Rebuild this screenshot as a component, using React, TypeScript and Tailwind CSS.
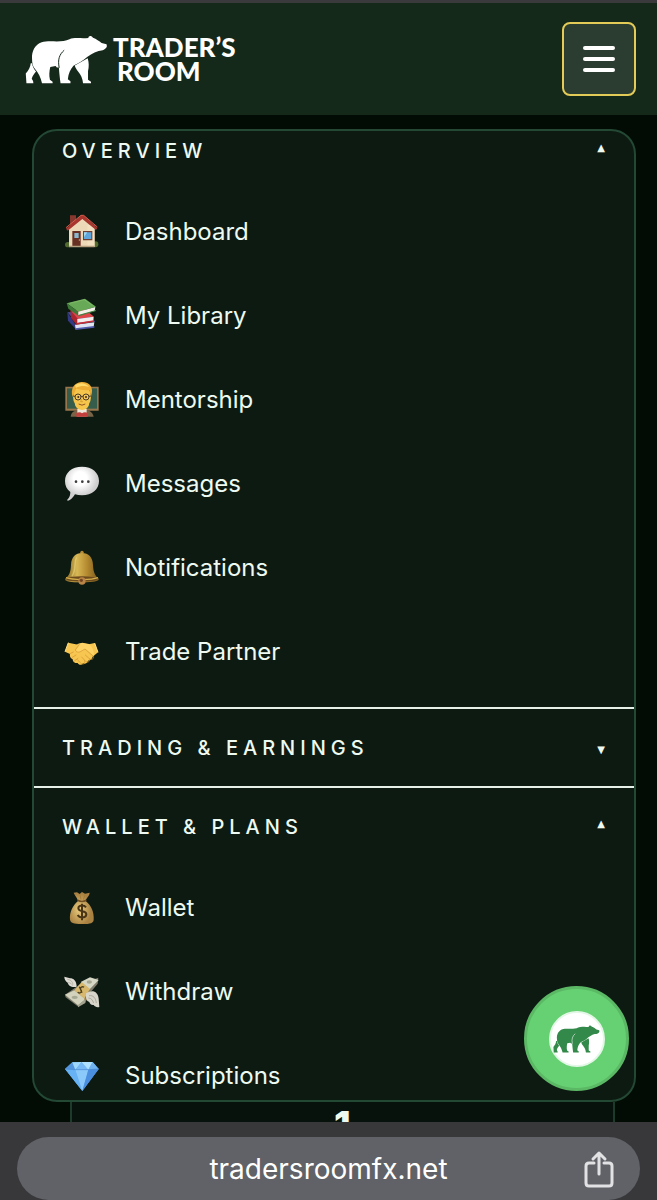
import React from 'react';

interface BearProps {
  className: string;
  cut: string;
}

const Bear: React.FC<BearProps> = ({ className, cut }) => (
  <svg viewBox="76 99 250 148" className={className} fill="currentColor" aria-hidden="true">
    <path d="M93 184 L97 184 C98 194 103 202 109 209 C103 216 98 222 96 231 L100 238 L101 245 L80 245 L78 215 C86 206 92 196 93 184Z" />
    <path d="M226 191 L265 169 C269 182 269 195 266 208 L266 234 L275 240 L275 245 L251 245 C250 231 244 218 236 209 C231 203 228 198 226 191Z" />
    <path d="M97 172 C95 148 106 128 126 121 C148 114 188 124 210 112 C226 105 246 111 267 108 C267 101 276 99 281 107 C291 111 300 117 307 123 L322 127 L323 133 C320 143 310 146 298 147 C281 152 268 161 254 173 C242 182 230 187 222 192 C213 202 207 214 205 233 L213 239 L213 245 L183 245 C181 229 179 214 178 197 L172 197 L168 193 L152 196 C149 209 148 222 151 234 L159 240 L159 245 L127 245 C123 226 116 214 106 202 C99 193 97 184 97 172Z" />
    <path d="M194 145 C179 158 174 174 179 198" fill="none" stroke={cut} strokeWidth="3" />
  </svg>
);

const House = () => (
  <>
    <ellipse cx="12" cy="95" rx="9" ry="8" fill="#526b2e" />
    <ellipse cx="95" cy="94" rx="8" ry="9" fill="#526b2e" />
    <path d="M18 7h18v25l-18 13z" fill="#87382e" />
    <path d="M15 46 54 14l38 31v57H15z" fill="#ecd9b7" />
    <path d="M70 35h22v67H70z" fill="#f7e7ca" opacity=".5" />
    <path d="M6 47 51 7h8l41 38-4 6-41-33-44 35z" fill="#a7372f" />
    <path d="M6 44 51 7h8l41 35" fill="none" stroke="#d65c4b" strokeWidth="3" />
    <path d="M25 54h25v48H25z" fill="#673023" />
    <path d="M31 60h13v15H31z" fill="#89b8cf" />
    <circle cx="46" cy="81" r="2" fill="#dfbe72" />
    <path d="M57 54h28v28H57z" fill="#704034" />
    <path d="M60 58h22v20H60z" fill="#5fa6dd" />
    <path d="M60 58h10L60 73z" fill="#a0d4ef" />
    <path d="M15 98h77v5H15z" fill="#b5a17f" />
  </>
);

const Books = () => (
  <>
    <path d="m10 46 32 35 52-7-29-30z" fill="#4250a0" />
    <path d="m10 46 2 25 25 27-2-15z" fill="#333a83" />
    <path d="m33 83 58-7-2 13-54 7z" fill="#dfe5f3" />
    <path d="m34 94 57-7v5l-57 7z" fill="#515bad" />
    <path d="m19 40 21 26 50-7-28-23z" fill="#de4649" />
    <path d="m19 40 2 23 17 21 3-19z" fill="#ad252e" />
    <path d="m40 66 49-7-1 12-48 7z" fill="#f4efed" />
    <path d="m38 78 52-8v4l-53 9z" fill="#cc3037" />
    <path d="m8 19 55-14 33 24-53 15z" fill="#67a957" />
    <path d="m8 19 5 16 30 21V44z" fill="#3e7938" />
    <path d="m43 44 51-14-2 12-49 13z" fill="#f1f1e8" />
    <path d="m43 54 53-15v3L44 58z" fill="#438341" />
    <path d="m17 19 44-11 24 17" fill="none" stroke="#89c26f" strokeWidth="2" />
  </>
);

const Teacher = () => (
  <>
    <path d="M4 17h100v72H4z" fill="#9a764d" />
    <path d="M9 22h90v61H9z" fill="#365d4c" />
    <path d="M20 107c2-17 15-21 34-21s32 5 35 21z" fill="#786346" />
    <path d="M40 84h28v22H40z" fill="#eee8dc" />
    <path d="M37 96c7-3 13-3 17 1 5-4 11-4 18-1v11H37z" fill="#c33f3d" />
    <ellipse cx="54" cy="47" rx="27" ry="36" fill="#f6c64c" />
    <ellipse cx="54" cy="69" rx="21" ry="18" fill="#f6c64c" />
    <path d="M26 48C18 23 31 5 52 3c25-1 39 16 29 43l-5-19C60 29 43 26 35 22c0 10-5 14-9 26z" fill="#eead35" />
    <path d="M33 13c11-9 32-9 42 5-13-5-26-4-39 2z" fill="#ffda6b" />
    <circle cx="42" cy="48" r="9" fill="#efc75e" stroke="#4c3b26" strokeWidth="3" />
    <circle cx="66" cy="48" r="9" fill="#efc75e" stroke="#4c3b26" strokeWidth="3" />
    <path d="M51 46h6M27 45l6 1m42 0 6-1" stroke="#4c3b26" strokeWidth="3" />
    <circle cx="43" cy="48" r="3" fill="#452b1a" />
    <circle cx="66" cy="48" r="3" fill="#452b1a" />
    <path d="m53 54-3 8h7" fill="none" stroke="#c98b27" strokeWidth="2" />
    <path d="M44 69q10 7 20 0" fill="none" stroke="#915424" strokeWidth="3" />
  </>
);

const Speech = () => (
  <>
    <defs>
      <radialGradient id="bubble" cx=".45" cy=".35">
        <stop offset=".4" stopColor="#fff" />
        <stop offset="1" stopColor="#cfcfcf" />
      </radialGradient>
    </defs>
    <path d="M54 5c31 0 51 18 51 43S84 91 54 91c-8 0-15-1-21-3-7 12-14 17-21 19-3 0-3-2-1-4 6-6 8-14 8-22C8 73 3 62 3 48 3 23 23 5 54 5z" fill="url(#bubble)" />
    <circle cx="36" cy="50" r="4" fill="#3c3c3c" />
    <circle cx="55" cy="50" r="4" fill="#3c3c3c" />
    <circle cx="73" cy="50" r="4" fill="#3c3c3c" />
  </>
);

const Bell = () => (
  <>
    <defs>
      <linearGradient id="brass">
        <stop stopColor="#7e6120" />
        <stop offset=".35" stopColor="#d8b855" />
        <stop offset=".65" stopColor="#b58b30" />
        <stop offset="1" stopColor="#78561c" />
      </linearGradient>
    </defs>
    <circle cx="54" cy="10" r="5" fill="#b58c34" />
    <path d="M54 12C34 12 22 25 21 47c-1 23-5 31-16 41-7 8 8 12 49 12s55-5 49-12C92 78 88 69 87 47c-1-22-13-35-33-35z" fill="url(#brass)" />
    <path d="M38 25c-9 14 0 37-14 56" fill="none" stroke="#edd57d" strokeWidth="4" opacity=".6" />
    <ellipse cx="54" cy="90" rx="47" ry="8" fill="#6e4b1e" />
    <path d="M6 86c20 7 74 8 96 0" fill="none" stroke="#d2ad4b" strokeWidth="4" />
    <circle cx="54" cy="96" r="11" fill="#b98447" />
    <circle cx="52" cy="94" r="5" fill="#754423" />
  </>
);

const Handshake = () => (
  <>
    <path d="m13 29 22 5c7 2 13-3 21-3l18 3 18-4 10 28-16 13c-2 8-8 10-14 12-2 7-9 11-15 8-5 7-13 5-16-1-12 2-15-7-15-11-8-3-9-10-8-16L3 56z" fill="#f7c650" />
    <path d="M37 34 55 29l20 4c10 8 15 21 15 35L65 49 48 57c-8 3-14-1-12-6l10-16z" fill="#ffd465" />
    <path d="M46 35 35 49c-2 8 8 10 14 7l14-8 25 22c3 7-6 12-11 8L64 66m13 12c2 10-9 12-13 6L53 72m9 11c2 10-5 13-11 8L41 81M18 62l10-5m-3 16 11-7m-4 17 10-7" fill="none" stroke="#cf922f" strokeWidth="2" strokeLinecap="round" />
    <path d="m13 29-10 27M92 30l10 28" stroke="#ffe28c" strokeWidth="3" />
  </>
);

const MoneyBag = () => (
  <>
    <defs>
      <radialGradient id="sack" cx=".4" cy=".55">
        <stop stopColor="#ecce80" />
        <stop offset="1" stopColor="#a98141" />
      </radialGradient>
    </defs>
    <path d="m29 11 10-1 8 5 7-6 9 5 14-3c0 9-11 16-12 25 16 12 26 34 24 56-1 10-8 13-35 13s-34-4-36-13c-2-22 8-43 24-56C40 26 32 20 29 11z" fill="url(#sack)" />
    <path d="M41 34q13 7 26 0" fill="none" stroke="#735023" strokeWidth="5" />
    <path d="m48 16 3 16m12-14-5 14" stroke="#a57e39" strokeWidth="3" />
    <path d="M66 55c-6-8-23-7-23 3 0 13 24 5 24 18 0 12-20 12-26 2M54 44v50" fill="none" stroke="#493516" strokeWidth="6" />
  </>
);

const FlyingMoney = () => (
  <>
    <path d="m3 65 47-32 53-19-2 18-58 69-38-28z" fill="#807d6d" />
    <path d="m3 65 28-13 34 27-23 18z" fill="#d2d2bd" />
    <path d="m50 27 28-14 26 8-27 28z" fill="#d6d7c5" />
    <path d="m31 52 22-25 25 21-17 29z" fill="#d7b86c" />
    <path d="m61 78 17-28v10L63 90z" fill="#9c793a" />
    <path d="m42 97 22-18v11l-22 13z" fill="#a4a38f" />
    <path d="M60 43c-5-5-14 2-9 8 5 5-4 12-10 7m5-17 8 18" fill="none" stroke="#4f4122" strokeWidth="4" />
    <path d="M37 42C19 44 13 36 11 29 4 24 1 18 1 11l17 5c11 0 19 8 20 23z" fill="#dedbd2" />
    <path d="M10 19c10 1 15 6 17 15M12 29c8 0 12 4 14 9" fill="none" stroke="#a5a198" strokeWidth="2" />
    <path d="M66 61c19-13 36-6 38 16l2 25c-8 2-13-1-17-6-8 1-12-4-13-9-7-1-10-8-10-14z" fill="#d8d5ca" />
    <path d="M75 68c13-2 20 7 22 22M73 75c9 0 13 7 16 15" fill="none" stroke="#999486" strokeWidth="2" />
    <ellipse cx="32" cy="73" rx="9" ry="5" fill="#a7a893" />
    <ellipse cx="76" cy="27" rx="8" ry="5" fill="#a7a893" />
  </>
);

const Gem = () => (
  <>
    <path d="m25 16 61-1 18 21-49 66L3 36z" fill="#5ea8ee" />
    <path d="m3 36 22-20 9 22z" fill="#5495df" />
    <path d="m25 16 28-1-19 23z" fill="#9ed8ff" />
    <path d="m53 15 20 23H34z" fill="#75b8f3" />
    <path d="m53 15 33 0-13 23z" fill="#b0e0ff" />
    <path d="m86 15 18 21-31 2z" fill="#70b4f2" />
    <path d="m3 36 31 2 21 64z" fill="#66b2f5" />
    <path d="M34 38h39l-18 64z" fill="#8cc9fb" />
    <path d="m73 38 31-2-49 66z" fill="#4a8edf" />
    <path d="m3 36 31 2h39l31-2" fill="none" stroke="#4a86cf" strokeWidth="2" />
  </>
);

interface MenuItem {
  label: string;
  Icon: React.FC;
}

interface Section {
  title: string;
  items: MenuItem[];
}

const overview: Section = {
  title: 'OVERVIEW',
  items: [
    { label: 'Dashboard', Icon: House },
    { label: 'My Library', Icon: Books },
    { label: 'Mentorship', Icon: Teacher },
    { label: 'Messages', Icon: Speech },
    { label: 'Notifications', Icon: Bell },
    { label: 'Trade Partner', Icon: Handshake },
  ],
};

const wallet: Section = {
  title: 'WALLET & PLANS',
  items: [
    { label: 'Wallet', Icon: MoneyBag },
    { label: 'Withdraw', Icon: FlyingMoney },
    { label: 'Subscriptions', Icon: Gem },
  ],
};

const SectionHeader: React.FC<{ title: string; open: boolean; className: string }> = ({ title, open, className }) => (
  <button
    type="button"
    aria-expanded={open}
    className={`flex w-full shrink-0 items-center justify-between pl-7 pr-[29px] text-left text-[20px] leading-6 font-medium tracking-[5px] ${className}`}
  >
    <span>{title}</span>
    <span className={`font-['DejaVu_Sans',sans-serif] text-[10px] leading-3 font-normal tracking-normal ${open ? 'pb-1.5' : 'pt-1'}`}>
      {open ? '▲' : '▼'}
    </span>
  </button>
);

const MenuList: React.FC<{ items: MenuItem[] }> = ({ items }) => (
  <ul className="px-[30px]">
    {items.map(({ label, Icon }) => (
      <li key={label}>
        <a href="#" className="flex h-[84px] items-center gap-[25px] text-[24px] leading-8">
          <svg viewBox="0 0 108 108" className="size-9 shrink-0" aria-hidden="true">
            <Icon />
          </svg>
          <span className="pt-0.5">{label}</span>
        </a>
      </li>
    ))}
  </ul>
);

export default function App() {
  return (
    <div className="relative flex h-screen flex-col overflow-hidden bg-[#030b05] font-['Inter',sans-serif] text-[#edfaf1]">
      <header className="flex h-[115px] shrink-0 items-center justify-between border-t-[3px] border-[#3a3a3c] bg-[#15291b] pl-[25px] pr-[21px]">
        <a href="#" className="flex items-center gap-[5px] text-white">
          <Bear className="h-[49px] w-[83px]" cut="#15291b" />
          <span className="font-['Lato',sans-serif] text-[26px] leading-6 font-black">
            <span className="block">TRADER’S</span>
            <span className="block pl-1">ROOM</span>
          </span>
        </a>
        <button
          type="button"
          aria-label="Menu"
          className="flex size-[74px] flex-col items-center justify-center gap-[7px] rounded-lg border-2 border-[#e3cb58] bg-[#2b3d30]"
        >
          <span className="h-1 w-8 rounded-full bg-white" />
          <span className="h-1 w-8 rounded-full bg-white" />
          <span className="h-1 w-8 rounded-full bg-white" />
        </button>
      </header>

      <main className="flex min-h-0 flex-1 flex-col pl-8 pr-[21px] pt-[14px]">
        <nav className="flex min-h-0 flex-1 flex-col overflow-hidden rounded-[25px] border-2 border-[#234833] bg-[#0d1a12]">
          <SectionHeader title={overview.title} open className="h-10" />
          <div className="pt-[18px] pb-[14px]">
            <MenuList items={overview.items} />
          </div>
          <SectionHeader title="TRADING & EARNINGS" open={false} className="h-[81px] border-y-2 border-[#e6f0e9]" />
          <SectionHeader title={wallet.title} open className="h-[77px]" />
          <MenuList items={wallet.items} />
        </nav>
        <section className="ml-[38px] mr-[21px] h-5 shrink-0 overflow-hidden border-x-2 border-[#1d3b2a] bg-[#07120c] pt-[3px] text-center text-[38px] leading-10 font-extrabold">
          1
        </section>
      </main>

      <footer className="flex h-[78px] shrink-0 bg-[#38383a] px-[17px] pt-[15px]">
        <div className="flex flex-1 items-center rounded-full bg-[#606267] pl-[57px] pr-[25px] text-white">
          <span className="flex-1 text-center text-[28px] leading-8">tradersroomfx.net</span>
          <button type="button" aria-label="Share" className="w-8">
            <svg viewBox="0 0 32 38" className="h-[38px] w-8" fill="none" stroke="#e2e2e4" strokeWidth="3" strokeLinecap="round" strokeLinejoin="round">
              <path d="M11 13H6q-3 0-3 3v17q0 3 3 3h20q3 0 3-3V16q0-3-3-3h-5M16 24V3M10 9l6-6 6 6" />
            </svg>
          </button>
        </div>
      </footer>

      <button
        type="button"
        aria-label="Open chat"
        className="absolute right-7 bottom-[109px] flex size-[105px] items-center justify-center rounded-full border-[3px] border-[#5bb865] bg-[#66d172]"
      >
        <span className="flex size-14 items-center justify-center rounded-full border-2 border-[#e3f7e6] bg-white text-[#33894a]">
          <Bear className="h-7 w-[47px] shrink-0" cut="#ffffff" />
        </span>
      </button>
    </div>
  );
}
